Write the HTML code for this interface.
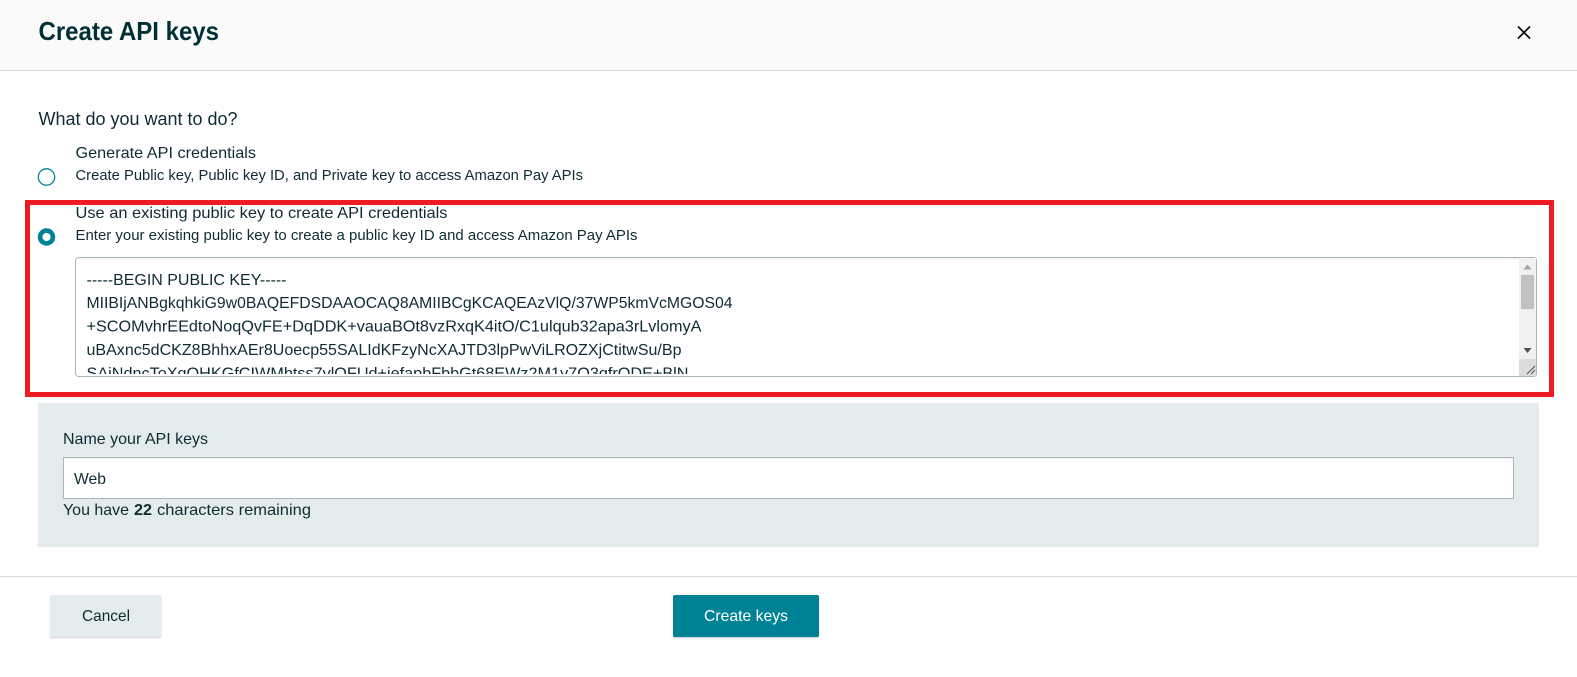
<!DOCTYPE html>
<html><head><meta charset="utf-8"><title>Create API keys</title>
<style>
html,body{margin:0;padding:0;background:#fff;width:1577px;height:677px;overflow:hidden}
svg{display:block;position:absolute;left:0;top:0}
text{font-family:"Liberation Sans",sans-serif;font-size:16px;fill:#0f2b33}
</style></head><body>
<svg width="1577" height="677" viewBox="0 0 1577 677" xmlns="http://www.w3.org/2000/svg">
<rect x="0" y="0" width="1577" height="70" fill="#fafafa"/>
<rect x="0" y="70" width="1577" height="1" fill="#d5dbdb"/>
<text x="38.5" y="40" style="font-size:26px;font-weight:700;fill:#002f36" textLength="180.5" lengthAdjust="spacingAndGlyphs">Create API keys</text>
<path d="M1518 26.5L1530 38.5M1530 26.5L1518 38.5" stroke="#0f1111" stroke-width="1.8" fill="none"/>

<text x="38.5" y="125" style="font-size:18px" textLength="199" lengthAdjust="spacingAndGlyphs">What do you want to do?</text>
<text x="75.5" y="158" style="font-size:16px" textLength="180.5" lengthAdjust="spacingAndGlyphs">Generate API credentials</text>
<text x="75.5" y="180" style="font-size:15px" textLength="507.5" lengthAdjust="spacingAndGlyphs">Create Public key, Public key ID, and Private key to access Amazon Pay APIs</text>
<circle cx="46.5" cy="177" r="8.2" fill="#fff" stroke="#008296" stroke-width="1.3"/>

<text x="75.5" y="218" style="font-size:16px" textLength="372" lengthAdjust="spacingAndGlyphs">Use an existing public key to create API credentials</text>
<text x="75.5" y="240" style="font-size:15px" textLength="562" lengthAdjust="spacingAndGlyphs">Enter your existing public key to create a public key ID and access Amazon Pay APIs</text>
<circle cx="46.5" cy="237" r="6.4" fill="#fff" stroke="#008296" stroke-width="4.6"/>

<rect x="75.5" y="257.5" width="1461" height="119" rx="3" fill="#fff" stroke="#aab7b8"/>
<rect x="77" y="258" width="1442" height="1" fill="#f0f2f2"/>
<clipPath id="ta"><rect x="76" y="258" width="1443" height="116"/></clipPath>
<g clip-path="url(#ta)">
<text x="86.5" y="285" textLength="200" lengthAdjust="spacingAndGlyphs">-----BEGIN PUBLIC KEY-----</text>
<text x="86.5" y="308" textLength="646" lengthAdjust="spacingAndGlyphs">MIIBIjANBgkqhkiG9w0BAQEFDSDAAOCAQ8AMIIBCgKCAQEAzVlQ/37WP5kmVcMGOS04</text>
<text x="86.5" y="331.5" textLength="615" lengthAdjust="spacingAndGlyphs">+SCOMvhrEEdtoNoqQvFE+DqDDK+vauaBOt8vzRxqK4itO/C1ulqub32apa3rLvlomyA</text>
<text x="86.5" y="355" textLength="595" lengthAdjust="spacingAndGlyphs">uBAxnc5dCKZ8BhhxAEr8Uoecp55SALIdKFzyNcXAJTD3lpPwViLROZXjCtitwSu/Bp</text>
<text x="86.5" y="378.5" textLength="602" lengthAdjust="spacingAndGlyphs">SAiNdncToXqOHKGfCIWMbtss7vlOFUd+iefapbFbbGt68EWz2M1v7O3qfrODE+BlN</text>
</g>
<rect x="1519" y="258" width="17" height="101" fill="#f1f1f1"/>
<rect x="1521" y="275" width="13" height="34" fill="#c1c1c1"/>
<path d="M1523.5 269.5h8l-4-5z" fill="#a3a3a3"/>
<path d="M1523.5 348h8l-4 5z" fill="#505050"/>
<rect x="1519" y="359" width="17" height="17" fill="#dcdcdc"/>
<path d="M1527 374L1535 366M1531 374L1535 370" stroke="#555" stroke-width="1" fill="none"/>

<rect x="27.5" y="202.5" width="1524" height="192" fill="none" stroke="#ed1c24" stroke-width="5"/>

<rect x="38" y="403" width="1501" height="144" fill="#e3ebec"/>
<text x="63" y="444" textLength="145" lengthAdjust="spacingAndGlyphs">Name your API keys</text>
<rect x="63.5" y="457.5" width="1450" height="41" fill="#fff" stroke="#aab7b8"/>
<rect x="64" y="458" width="1449" height="1" fill="#f0f2f2"/>
<text x="74" y="484" textLength="32" lengthAdjust="spacingAndGlyphs">Web</text>
<text x="63" y="515" textLength="66" lengthAdjust="spacingAndGlyphs">You have</text>
<text x="134" y="515" style="font-weight:700" textLength="18" lengthAdjust="spacingAndGlyphs">22</text>
<text x="157" y="515" textLength="154" lengthAdjust="spacingAndGlyphs">characters remaining</text>

<rect x="0" y="576" width="1577" height="1" fill="#d5dbdb"/>
<rect x="49.5" y="596" width="112" height="42.5" rx="2" fill="#b4bcbc" opacity=".45"/>
<rect x="49.5" y="595" width="112" height="42" rx="2" fill="#e3ebec"/>
<text x="82" y="621" textLength="48" lengthAdjust="spacingAndGlyphs">Cancel</text>
<rect x="673" y="596" width="146" height="42.5" rx="2" fill="#9cb4b8" opacity=".45"/>
<rect x="673" y="595" width="146" height="42" rx="2" fill="#008296"/>
<text x="704" y="621" style="fill:#fff" textLength="84" lengthAdjust="spacingAndGlyphs">Create keys</text>
</svg>
</body></html>
